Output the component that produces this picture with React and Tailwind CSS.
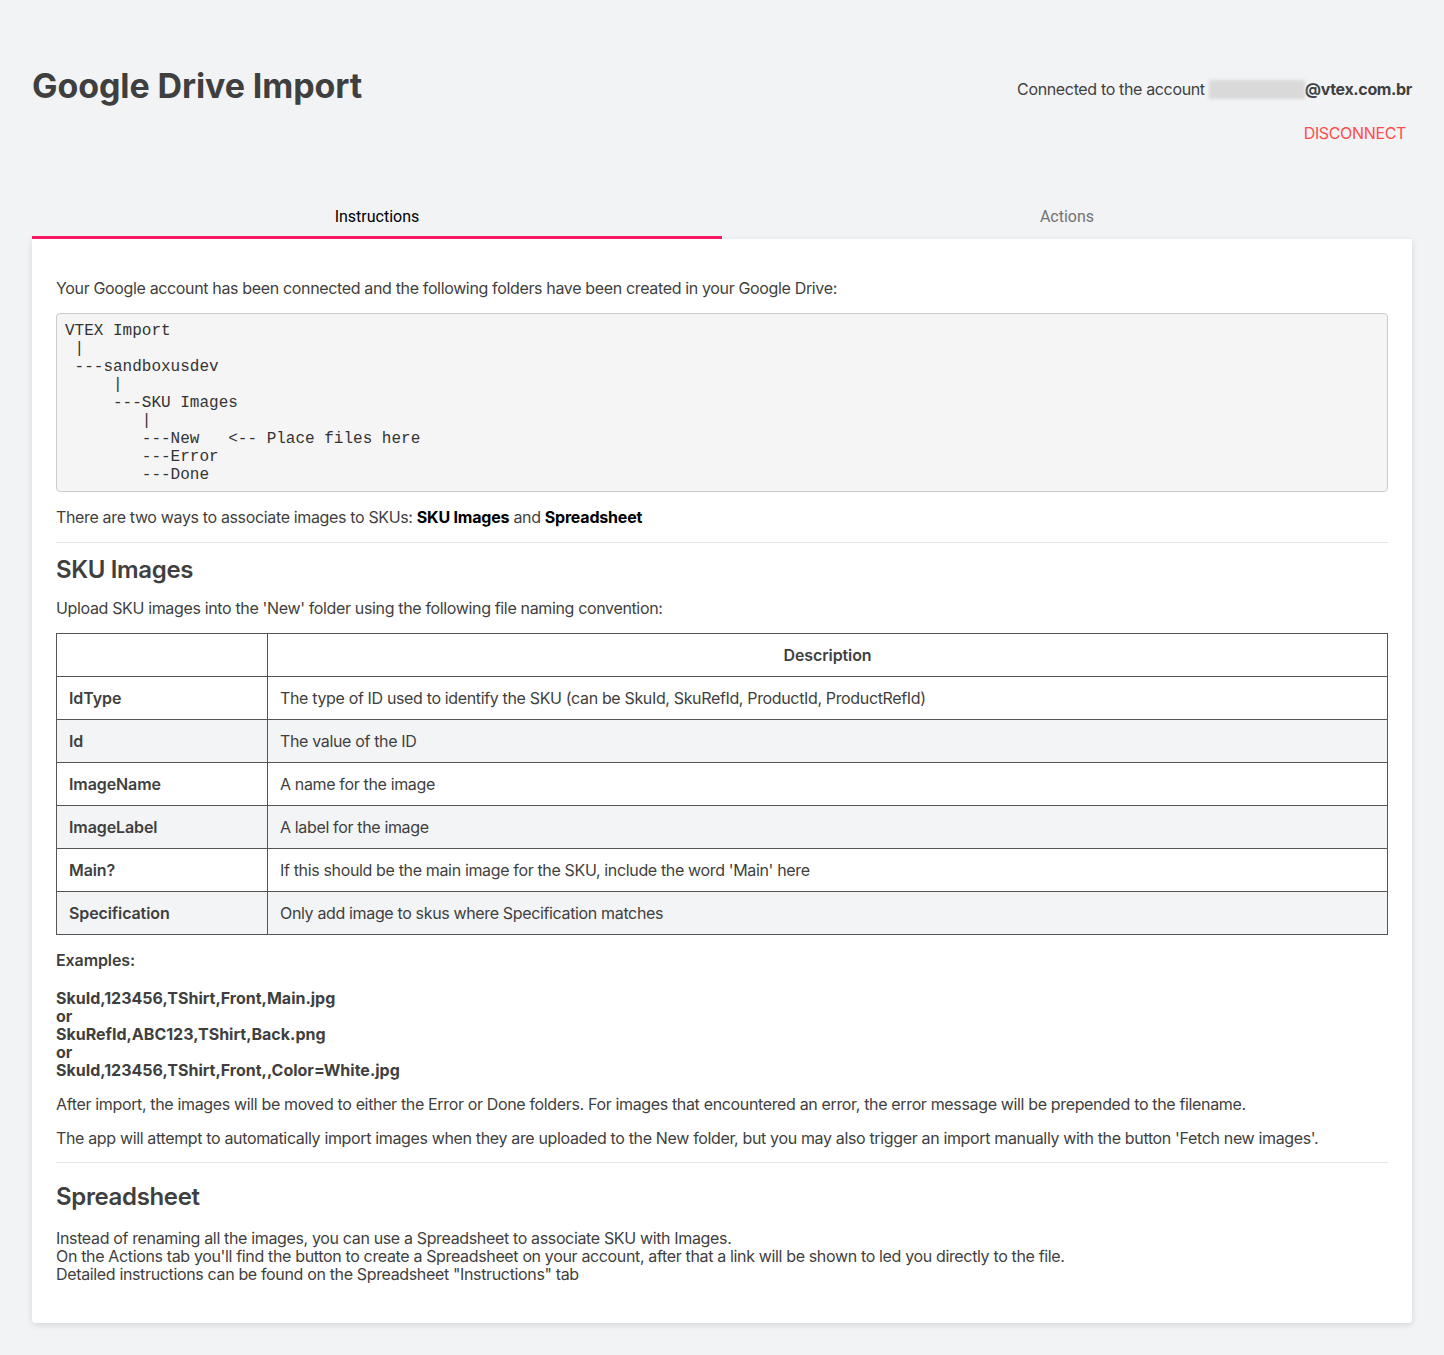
import React from "react";

const rows = [
  ["IdType", "The type of ID used to identify the SKU (can be SkuId, SkuRefId, ProductId, ProductRefId)"],
  ["Id", "The value of the ID"],
  ["ImageName", "A name for the image"],
  ["ImageLabel", "A label for the image"],
  ["Main?", "If this should be the main image for the SKU, include the word 'Main' here"],
  ["Specification", "Only add image to skus where Specification matches"],
];

const tree = `VTEX Import
 |
 ---sandboxusdev
     |
     ---SKU Images
        |
        ---New   <-- Place files here
        ---Error
        ---Done`;

export default function App() {
  return (
    <div className="min-h-[1355px] bg-[#f2f3f5] px-8 pt-[64px] pb-8 text-[#3f3f40] font-['Inter',sans-serif] tracking-[-0.35px]">
      {/* HEADER */}
      <div className="flex justify-between items-start">
        <h1 className="text-[34px] font-bold leading-[44px] tracking-[-0.1px]">
          Google Drive Import
        </h1>
        <div className="flex flex-col items-end pt-[14px]">
          <div className="flex items-center text-base leading-[22px]">
            <span>Connected to the account</span>
            <span className="ml-[4px] w-[96px] h-[19px] bg-[#d9d9d9] blur-[1.5px]"></span>
            <span className="font-bold">@vtex.com.br</span>
          </div>
          <button className="mt-[22px] mr-[6px] text-base leading-[22px] text-[#ff4c4c] uppercase">
            Disconnect
          </button>
        </div>
      </div>

      {/* TABS */}
      <div className="mt-[54px] flex font-['Roboto',sans-serif] tracking-normal">
        <div className="flex-1 h-[41px] flex items-center justify-center text-base text-black border-b-[3px] border-[#f71963] pb-[1px]">
          Instructions
        </div>
        <div className="flex-1 h-[41px] flex items-center justify-center text-base text-[#727273] border-b-[3px] border-transparent pb-[1px]">
          Actions
        </div>
      </div>

      {/* CARD */}
      <div className="bg-white rounded-b shadow-[0_2px_6px_rgba(0,0,0,0.12)] px-6 pt-[38px] pb-[40px] text-base leading-[22px]">
        <p>
          Your Google account has been connected and the following folders have been created in your Google Drive:
        </p>
        <pre className="mt-[14px] bg-[#f5f5f5] border border-[#cccccc] rounded px-2 pt-[8px] pb-[7px] font-['Liberation_Mono',monospace] text-base leading-[18px] tracking-normal text-[#333]">
          {tree}
        </pre>
        <p className="mt-[14px]">
          There are two ways to associate images to SKUs:{" "}
          <b className="text-black tracking-[-0.2px]">SKU Images</b> and{" "}
          <b className="text-black tracking-[-0.2px]">Spreadsheet</b>
        </p>
        <hr className="mt-[14px] border-[#e5e5e5]" />
        <h2 className="mt-[12px] text-2xl font-semibold leading-[30px]">SKU Images</h2>
        <p className="mt-[12px]">Upload SKU images into the 'New' folder using the following file naming convention:</p>

        <table className="mt-[14px] w-full border-collapse border border-[#555]">
          <thead>
            <tr className="h-[43px]">
              <th className="border border-[#555] w-[211px]"></th>
              <th className="border border-[#555] font-semibold text-center tracking-[-0.1px]">Description</th>
            </tr>
          </thead>
          <tbody>
            {rows.map(([k, v], i) => (
              <tr key={k} className={i % 2 === 1 ? "h-[43px] bg-[#f3f4f6]" : "h-[43px]"}>
                <td className="border border-[#555] px-3 font-semibold tracking-[-0.1px]">{k}</td>
                <td className="border border-[#555] px-3">{v}</td>
              </tr>
            ))}
          </tbody>
        </table>

        <p className="mt-[14px] font-semibold tracking-[-0.1px]">Examples:</p>
        <p className="mt-[18px] font-bold leading-[18px] tracking-[0px]">
          SkuId,123456,TShirt,Front,Main.jpg
          <br />
          or
          <br />
          SkuRefId,ABC123,TShirt,Back.png
          <br />
          or
          <br />
          SkuId,123456,TShirt,Front,,Color=White.jpg
        </p>
        <p className="mt-[14px]">
          After import, the images will be moved to either the Error or Done folders. For images that encountered an error, the error message will be prepended to the filename.
        </p>
        <p className="mt-[12px]">
          The app will attempt to automatically import images when they are uploaded to the New folder, but you may also trigger an import manually with the button 'Fetch new images'.
        </p>
        <hr className="mt-[13px] border-[#e5e5e5]" />
        <h2 className="mt-[19px] text-2xl font-semibold leading-[30px]">Spreadsheet</h2>
        <p className="mt-[17px] leading-[18px]">
          Instead of renaming all the images, you can use a Spreadsheet to associate SKU with Images.
          <br />
          On the Actions tab you'll find the button to create a Spreadsheet on your account, after that a link will be shown to led you directly to the file.
          <br />
          Detailed instructions can be found on the Spreadsheet "Instructions" tab
        </p>
      </div>
    </div>
  );
}
